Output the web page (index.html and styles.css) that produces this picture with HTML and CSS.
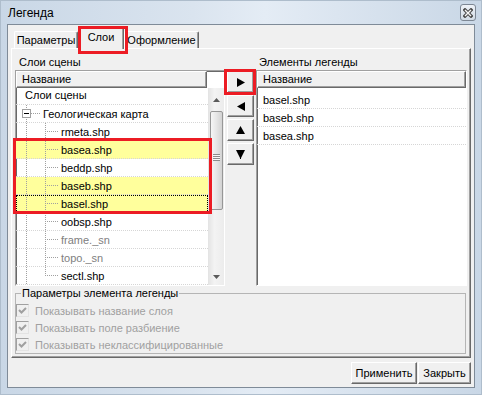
FILE: index.html
```html
<!DOCTYPE html>
<html lang="ru">
<head>
    <meta charset="UTF-8">
    <meta name="viewport" content="width=device-width, initial-scale=1.0">
    <title>Легенда</title>

    <link rel="stylesheet" href="styles.css">
</head>
<body>
    <div class="window">
        <div class="titlebar">
            <span class="caption">Легенда</span>
            <button class="close">
                <svg width="10" height="10" viewBox="0 0 10 10">
                    <path d="M2 2 L8 8 M8 2 L2 8" stroke="#4a4a4a" stroke-width="3.4" stroke-linecap="square" fill="none"/>
                    <path d="M2 2 L8 8 M8 2 L2 8" stroke="#f6f6f6" stroke-width="1.4" fill="none"/>
                </svg>
            </button>
        </div>

        <div class="client">
            <div class="tabs">
                <div class="tabstrip">
                    <div class="tab tab-params">Параметры</div>
                    <div class="tab tab-layers active marked">Слои</div>
                    <div class="tab tab-design">Оформление</div>
                </div>

                <div class="tabpanel">
                    <div class="layers">
                        <div class="list-caption">Слои сцены</div>
                        <div></div>
                        <div class="list-caption right">Элементы легенды</div>

                        <div class="listbox">
                            <div class="listhead">
                                <div class="colhead">Название</div>
                                <div class="headfill"></div>
                            </div>
                            <div class="listbody">
                                <div class="tree">
                                    <div class="tree-row tree-root"><span>Слои сцены</span></div>
                                    <div class="tree-row tree-group"><span class="expander"></span>Геологическая карта</div>
                                    <div class="tree-row tree-child">rmeta.shp</div>
                                    <div class="marked-rows marked">
                                        <div class="tree-row tree-child sel">basea.shp</div>
                                        <div class="tree-row tree-child">beddp.shp</div>
                                        <div class="tree-row tree-child sel">baseb.shp</div>
                                        <div class="tree-row tree-child sel focus">basel.shp</div>
                                    </div>
                                    <div class="tree-row tree-child">oobsp.shp</div>
                                    <div class="tree-row tree-child muted">frame._sn</div>
                                    <div class="tree-row tree-child muted">topo._sn</div>
                                    <div class="tree-row tree-child last">sectl.shp</div>
                                </div>
                                <div class="scrollbar">
                                    <div class="sb-arrow sb-up">
                                        <svg width="7" height="4" viewBox="0 0 7 4"><polygon points="0,4 3.5,0 7,4" fill="#5a5a5a"/></svg>
                                    </div>
                                    <div class="sb-track">
                                        <div class="sb-thumb"><span class="grip"></span></div>
                                    </div>
                                    <div class="sb-arrow sb-down">
                                        <svg width="7" height="4" viewBox="0 0 7 4"><polygon points="0,0 7,0 3.5,4" fill="#5a5a5a"/></svg>
                                    </div>
                                </div>
                            </div>
                        </div>

                        <div class="movebuttons">
                            <button class="move marked">
                                <svg width="8" height="9" viewBox="0 0 8 9"><polygon points="0,0 8,4.5 0,9" fill="#000"/></svg>
                            </button>
                            <button class="move">
                                <svg width="8" height="9" viewBox="0 0 8 9"><polygon points="8,0 0,4.5 8,9" fill="#000"/></svg>
                            </button>
                            <button class="move">
                                <svg width="9" height="8" viewBox="0 0 9 8"><polygon points="0,8 4.5,0 9,8" fill="#000"/></svg>
                            </button>
                            <button class="move">
                                <svg width="9" height="9" viewBox="0 0 9 9"><polygon points="0,0 9,0 5,8 5,9 4,9 4,8" fill="#000"/></svg>
                            </button>
                        </div>

                        <div class="listbox legend-list">
                            <div class="listhead">
                                <div class="colhead wide">Название</div>
                            </div>
                            <div class="rows">
                                <div class="item">basel.shp</div>
                                <div class="item">baseb.shp</div>
                                <div class="item">basea.shp</div>
                            </div>
                        </div>
                    </div>

                    <fieldset class="group">
                        <legend>Параметры элемента легенды</legend>
                        <label class="check">
                            <span class="box"><svg width="11" height="11" viewBox="0 0 11 11"><path d="M2 5 L4.5 7.5 L9 3" stroke="#a0a0a0" stroke-width="2" fill="none"/></svg></span>
                            Показывать название слоя
                        </label>
                        <label class="check">
                            <span class="box"><svg width="11" height="11" viewBox="0 0 11 11"><path d="M2 5 L4.5 7.5 L9 3" stroke="#a0a0a0" stroke-width="2" fill="none"/></svg></span>
                            Показывать поле разбиение
                        </label>
                        <label class="check">
                            <span class="box"><svg width="11" height="11" viewBox="0 0 11 11"><path d="M2 5 L4.5 7.5 L9 3" stroke="#a0a0a0" stroke-width="2" fill="none"/></svg></span>
                            Показывать неклассифицированные
                        </label>
                    </fieldset>
                </div>
            </div>

            <div class="footer">
                <button class="btn btn-apply">Применить</button>
                <button class="btn btn-close">Закрыть</button>
            </div>
        </div>
    </div>
</body>
</html>
```

FILE: styles.css
```css
* {
    box-sizing: border-box;
}
body {
    margin: 0;
    font-family: "Liberation Sans", Arial, sans-serif;
    font-size: 11px;
    color: #000;
    --vdot: repeating-linear-gradient(to bottom, #a0a0a0 0 1px, transparent 1px 2px);
    --hdot: repeating-linear-gradient(to right, #a0a0a0 0 1px, transparent 1px 2px);
}
button {
    font: inherit;
    color: inherit;
    padding: 0;
    margin: 0;
}
.window {
    width: 482px;
    height: 395px;
    border: 1px solid #aebdcc;
    background: linear-gradient(to right, #c9d7e6 0%, #dae4ef 40%, #e4ecf5 55%, #c9d7e6 100%);
    display: flex;
    flex-direction: column;
}
.titlebar {
    height: 23px;
    display: flex;
    align-items: center;
    justify-content: space-between;
    padding: 0 5px 0 7px;
}
.caption {
    font-size: 12px;
}
.close {
    width: 16px;
    height: 17px;
    border: 1px solid #7d8794;
    border-radius: 3px;
    background: linear-gradient(#eef2f7, #d2dbe5);
    display: flex;
    align-items: center;
    justify-content: center;
}

.client {
    flex: 1;
    margin: 0 6px 6px;
    border: 1px solid #7f8b98;
    background: #f0f0f0;
    display: flex;
    flex-direction: column;
}
.tabs {
    margin: 2px 0 0 3px;
    width: 460px;
}
.tabstrip {
    height: 21px;
    display: flex;
    align-items: flex-end;
    padding-left: 3px;
}
.tab {
    height: 17px;
    line-height: 15px;
    padding-top: 1px;
    text-align: center;
    background: #f0f0f0;
    border: 1px solid;
    border-bottom: 0;
    border-color: #fff #696969 #fff #fff;
    box-shadow: inset -1px 0 #a0a0a0;
    border-radius: 2px 2px 0 0;
}
.tab-params {
    width: 64px;
}
.tab-layers {
    width: 46px;
    height: 22px;
    margin-bottom: -1px;
    padding-top: 2px;
    position: relative;
}
.tab-design {
    width: 75px;
}
.marked::after {
    content: '';
    position: absolute;
    border: 3px solid #ec1c24;
    pointer-events: none;
}
.tab-layers.marked::after {
    inset: -2px -5px -5px -1px;
}

.tabpanel {
    height: 310px;
    border: 1px solid;
    border-color: #fff #696969 #696969 #fff;
    box-shadow: inset -1px -1px #a0a0a0;
    padding-left: 3px;
}
.layers {
    display: grid;
    grid-template-columns: 210px 27px 211px;
    grid-template-rows: 21px 216px;
    column-gap: 2px;
}
.list-caption {
    align-self: end;
    line-height: 14px;
    padding: 0 0 1px 4px;
}
.list-caption.right {
    padding-left: 3px;
}

.listbox {
    border: 1px solid;
    border-color: #a0a0a0 #fff #fff #a0a0a0;
    box-shadow: inset 1px 1px #696969;
    background: #fff;
    display: flex;
    flex-direction: column;
}
.listhead {
    display: flex;
    height: 17px;
}
.colhead {
    width: 191px;
    line-height: 15px;
    padding-left: 5px;
    background: #f0f0f0;
    border: 1px solid;
    border-color: #fff #696969 #696969 #fff;
    box-shadow: inset -1px -1px #a0a0a0;
}
.colhead.wide {
    width: 100%;
}
.headfill {
    flex: 1;
}
.listbody {
    flex: 1;
    display: flex;
    min-height: 0;
}
.tree {
    width: 192px;
}
.tree-row {
    height: 18px;
    display: flex;
    align-items: center;
    white-space: nowrap;
    border-bottom: 1px dotted #d6d6d6;
    background-origin: border-box;
    background-repeat: no-repeat;
}
.tree-root {
    height: 17px;
    align-items: flex-end;
    line-height: 18px;
    padding-left: 9px;
    overflow: hidden;
}
.tree-group {
    padding-left: 6px;
    background-image: var(--hdot), var(--vdot);
    background-size: 10px 1px, 1px 100%;
    background-position: 15px 8px, 10px 0;
}
.expander {
    width: 9px;
    height: 9px;
    margin-right: 12px;
    border: 1px solid #a0a0a0;
    background: #fff;
    display: flex;
    align-items: center;
    justify-content: center;
}
.expander::before {
    content: '';
    width: 5px;
    height: 1px;
    background: #000;
}
.tree-child {
    padding-left: 45px;
    background-image: var(--hdot), var(--vdot), var(--vdot);
    background-size: 11px 1px, 1px 100%, 1px 100%;
    background-position: 31px 8px, 29px 0, 10px 0;
}
.tree-child.last {
    background-size: 11px 1px, 1px 9px, 1px 100%;
}
.muted {
    color: #808080;
}
.sel {
    background-color: #ffff9c;
}
.focus {
    outline: 1px dotted #000;
    outline-offset: -1px;
}
.marked-rows {
    position: relative;
}
.marked-rows.marked::after {
    inset: -3px -4px -1px -3px;
}

.scrollbar {
    width: 16px;
    display: flex;
    flex-direction: column;
    background: linear-gradient(to right, #e3e3e3, #f3f3f3 40%, #ececec);
}
.sb-arrow {
    display: flex;
    align-items: center;
    justify-content: center;
}
.sb-up {
    height: 22px;
    padding-top: 2px;
}
.sb-down {
    height: 17px;
}
.sb-track {
    flex: 1;
    padding: 1px 1px 0 2px;
}
.sb-thumb {
    height: 99px;
    border: 1px solid #979797;
    border-radius: 2px;
    background: linear-gradient(to right, #f6f6f6, #e6e6e6 50%, #d3d3d3);
    display: flex;
    align-items: center;
    justify-content: center;
}
.grip {
    width: 7px;
    height: 7px;
    margin-top: -6px;
    background: repeating-linear-gradient(to bottom, #8c8c8c 0 1px, #f8f8f8 1px 2px);
}

.movebuttons {
    display: flex;
    flex-direction: column;
    gap: 2px;
    padding-top: 1px;
}
.move {
    height: 22px;
    background: #f0f0f0;
    border: 1px solid;
    border-color: #fff #696969 #696969 #fff;
    box-shadow: inset -1px -1px #a0a0a0;
    display: flex;
    align-items: center;
    justify-content: center;
}
.move.marked {
    position: relative;
}
.move.marked::after {
    inset: -3px -3px -3px -4px;
}

.legend-list .rows {
    padding-top: 3px;
}
.item {
    height: 18px;
    padding-left: 6px;
    display: flex;
    align-items: center;
    border-bottom: 1px dotted #d6d6d6;
}

.group {
    margin: 1px 4px 0 0;
    height: 67px;
    padding: 2px 0 0 0;
    border: 1px solid #b5b5b5;
    min-width: 0;
}
.group legend {
    margin-left: 5px;
    padding: 0 1px;
    line-height: 13px;
}
.check {
    height: 17px;
    display: flex;
    align-items: center;
    gap: 6px;
    color: #a0a0a0;
}
.box {
    width: 13px;
    height: 13px;
    border: 1px solid;
    border-color: #a0a0a0 #e3e3e3 #e3e3e3 #a0a0a0;
    display: flex;
    align-items: center;
    justify-content: center;
}

.footer {
    flex: 1;
    display: flex;
    justify-content: flex-end;
    align-items: flex-start;
    gap: 1px;
    padding: 4px 3px 0 0;
}
.btn {
    height: 22px;
    background: #f0f0f0;
    border: 1px solid;
    border-color: #fff #696969 #696969 #fff;
    box-shadow: inset -1px -1px #a0a0a0;
}
.btn-apply {
    width: 66px;
}
.btn-close {
    width: 53px;
}
```
